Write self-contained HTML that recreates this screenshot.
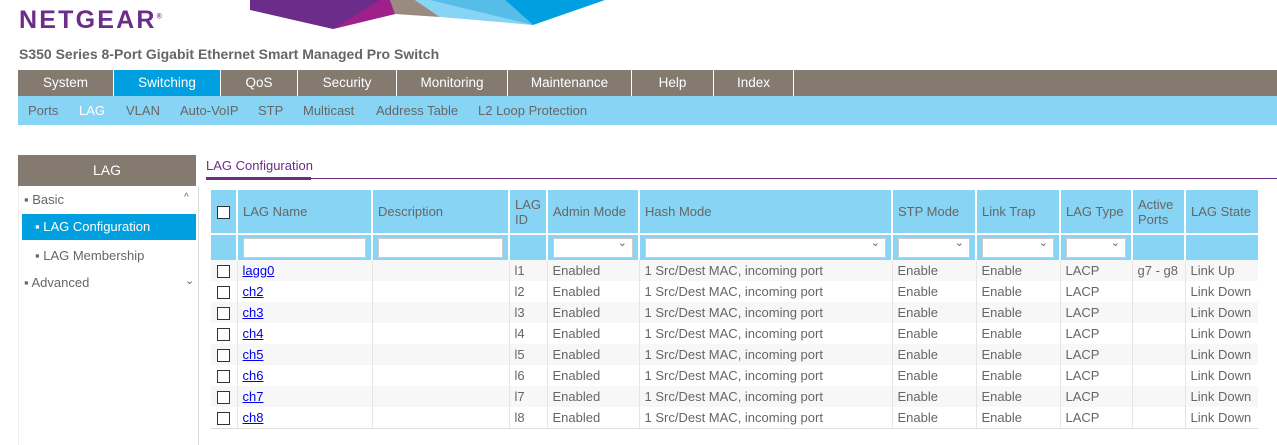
<!DOCTYPE html>
<html><head><meta charset="utf-8"><style>
*{box-sizing:border-box;margin:0;padding:0}
body{width:1277px;height:445px;overflow:hidden;background:#fff;font-family:"Liberation Sans",Arial,sans-serif;font-size:13px;color:#555;position:relative}
.abs{position:absolute}
.logo{left:19px;top:6px;font-size:25px;font-weight:bold;color:#6b2c8a;letter-spacing:2.2px}
.title{left:19px;top:46px;font-size:14px;font-weight:bold;color:#666}
.nav{left:18px;top:70px;width:1259px;height:26px;background:#847a70}
.nav div{position:absolute;top:0;height:26px;line-height:25px;text-align:center;color:#fff;font-size:13.5px;border-right:1px solid #fff}
.sub{left:18px;top:96px;width:1259px;height:29px;background:#88d4f4}
.sub span{position:absolute;top:7px;color:#666;font-size:13px}
.side{left:18px;top:155px;width:178px;height:31px;background:#847a70;color:#fff;text-align:center;line-height:31px;font-size:14px}
.vline{left:198px;top:186px;width:1px;height:259px;background:#ddd}
.vline2{left:18px;top:186px;width:1px;height:259px;background:#eee}
table{position:absolute;left:211px;top:190px;border-collapse:collapse;font-size:13px}
td,th{font-weight:normal;text-align:left;padding:0 5px;white-space:nowrap}
thead th{background:#88d4f4;color:#666;border-left:2px solid #fff;height:44px;line-height:15px}
thead tr.f td{background:#88d4f4;border-left:2px solid #fff;border-top:2px solid #fff;height:26px;padding:0 5px}
tbody td{height:21px;border-left:1px solid #e5e5e5;color:#666}
tbody tr:nth-child(odd) td{background:#f7f7f7}
tbody tr:last-child td{border-bottom:1px solid #ddd}
.cb{display:inline-block;width:13px;height:13px;border:1px solid #333;background:#fff;vertical-align:middle}
.inp{height:20px;background:#fff;border:1px solid #ccc;position:relative}
.inp.s::after{content:"⌄";position:absolute;right:5px;top:-3px;font-size:11px;color:#666}
a{color:#00e;text-decoration:underline}
</style></head><body>
<svg class="abs" style="left:250px;top:0" width="400" height="30" viewBox="0 0 400 30">
<polygon points="0,10 83,29 145,14 140,0 0,0" fill="#6b2c8a"/>
<polygon points="83,29 145,14 140,0 130,0" fill="#a0208a"/>
<polygon points="145,14 190,17 165,0 140,0" fill="#9a8a80"/>
<polygon points="165,0 190,17 283,25 250,0" fill="#88d4f4"/>
<polygon points="180,0 283,25 255,0" fill="#55bde8"/>
<polygon points="255,0 283,25 355,0" fill="#00a0e0"/>
</svg>
<div class="abs logo">NETGEAR<sup style="font-size:7px">®</sup></div>
<div class="abs title">S350 Series 8-Port Gigabit Ethernet Smart Managed Pro Switch</div>
<div class="abs nav">
<div style="left:0;width:96px">System</div>
<div style="left:96px;width:107px;background:#00a0e0">Switching</div>
<div style="left:203px;width:77px">QoS</div>
<div style="left:280px;width:99px">Security</div>
<div style="left:379px;width:111px">Monitoring</div>
<div style="left:490px;width:124px">Maintenance</div>
<div style="left:614px;width:82px">Help</div>
<div style="left:696px;width:80px">Index</div>
</div>
<div class="abs sub">
<span style="left:10px">Ports</span><span style="left:61px;color:#fff">LAG</span><span style="left:108px">VLAN</span><span style="left:162px">Auto-VoIP</span><span style="left:240px">STP</span><span style="left:285px">Multicast</span><span style="left:358px">Address Table</span><span style="left:460px">L2 Loop Protection</span>
</div>
<div class="abs side">LAG</div>
<div class="abs vline"></div><div class="abs vline2"></div>
<div class="abs" style="left:24px;top:192px;color:#666">▪ Basic</div>
<div class="abs" style="left:184px;top:192px;font-size:10px;color:#666">^</div>
<div class="abs" style="left:22px;top:214px;width:174px;height:26px;background:#00a0e0;color:#fff;line-height:26px;padding-left:13px">▪ LAG Configuration</div>
<div class="abs" style="left:35px;top:248px;color:#666">▪ LAG Membership</div>
<div class="abs" style="left:24px;top:275px;color:#666">▪ Advanced</div>
<div class="abs" style="left:185px;top:274px;font-size:11px;color:#666">⌄</div>
<div class="abs" style="left:206px;top:158px;color:#6b2c8a;font-size:13px">LAG Configuration</div>
<div class="abs" style="left:206px;top:177px;width:105px;height:3px;background:#6b2c8a"></div>
<div class="abs" style="left:311px;top:178px;width:966px;height:1px;background:#6b2c8a"></div>
<table>
<thead>
<tr><th style="width:25px;border-left:0;padding:0 6px"><span class="cb"></span></th><th style="width:135px">LAG Name</th><th style="width:137px">Description</th><th style="width:38px">LAG<br>ID</th><th style="width:92px">Admin Mode</th><th style="width:253px">Hash Mode</th><th style="width:84px">STP Mode</th><th style="width:84px">Link Trap</th><th style="width:72px">LAG Type</th><th style="width:53px">Active<br>Ports</th><th style="width:73px">LAG State</th></tr>
<tr class="f"><td style="border-left:0"></td><td><div class="inp"></div></td><td><div class="inp"></div></td><td></td><td><div class="inp s"></div></td><td><div class="inp s"></div></td><td><div class="inp s"></div></td><td><div class="inp s"></div></td><td><div class="inp s"></div></td><td></td><td></td></tr>
</thead>
<tbody>
<tr><td style="border-left:0;padding:0 6px"><span class="cb"></span></td><td><a>lagg0</a></td><td></td><td>l1</td><td>Enabled</td><td>1 Src/Dest MAC, incoming port</td><td>Enable</td><td>Enable</td><td>LACP</td><td>g7 - g8</td><td>Link Up</td></tr>
<tr><td style="border-left:0;padding:0 6px"><span class="cb"></span></td><td><a>ch2</a></td><td></td><td>l2</td><td>Enabled</td><td>1 Src/Dest MAC, incoming port</td><td>Enable</td><td>Enable</td><td>LACP</td><td></td><td>Link Down</td></tr>
<tr><td style="border-left:0;padding:0 6px"><span class="cb"></span></td><td><a>ch3</a></td><td></td><td>l3</td><td>Enabled</td><td>1 Src/Dest MAC, incoming port</td><td>Enable</td><td>Enable</td><td>LACP</td><td></td><td>Link Down</td></tr>
<tr><td style="border-left:0;padding:0 6px"><span class="cb"></span></td><td><a>ch4</a></td><td></td><td>l4</td><td>Enabled</td><td>1 Src/Dest MAC, incoming port</td><td>Enable</td><td>Enable</td><td>LACP</td><td></td><td>Link Down</td></tr>
<tr><td style="border-left:0;padding:0 6px"><span class="cb"></span></td><td><a>ch5</a></td><td></td><td>l5</td><td>Enabled</td><td>1 Src/Dest MAC, incoming port</td><td>Enable</td><td>Enable</td><td>LACP</td><td></td><td>Link Down</td></tr>
<tr><td style="border-left:0;padding:0 6px"><span class="cb"></span></td><td><a>ch6</a></td><td></td><td>l6</td><td>Enabled</td><td>1 Src/Dest MAC, incoming port</td><td>Enable</td><td>Enable</td><td>LACP</td><td></td><td>Link Down</td></tr>
<tr><td style="border-left:0;padding:0 6px"><span class="cb"></span></td><td><a>ch7</a></td><td></td><td>l7</td><td>Enabled</td><td>1 Src/Dest MAC, incoming port</td><td>Enable</td><td>Enable</td><td>LACP</td><td></td><td>Link Down</td></tr>
<tr><td style="border-left:0;padding:0 6px"><span class="cb"></span></td><td><a>ch8</a></td><td></td><td>l8</td><td>Enabled</td><td>1 Src/Dest MAC, incoming port</td><td>Enable</td><td>Enable</td><td>LACP</td><td></td><td>Link Down</td></tr>
</tbody>
</table>
</body></html>
